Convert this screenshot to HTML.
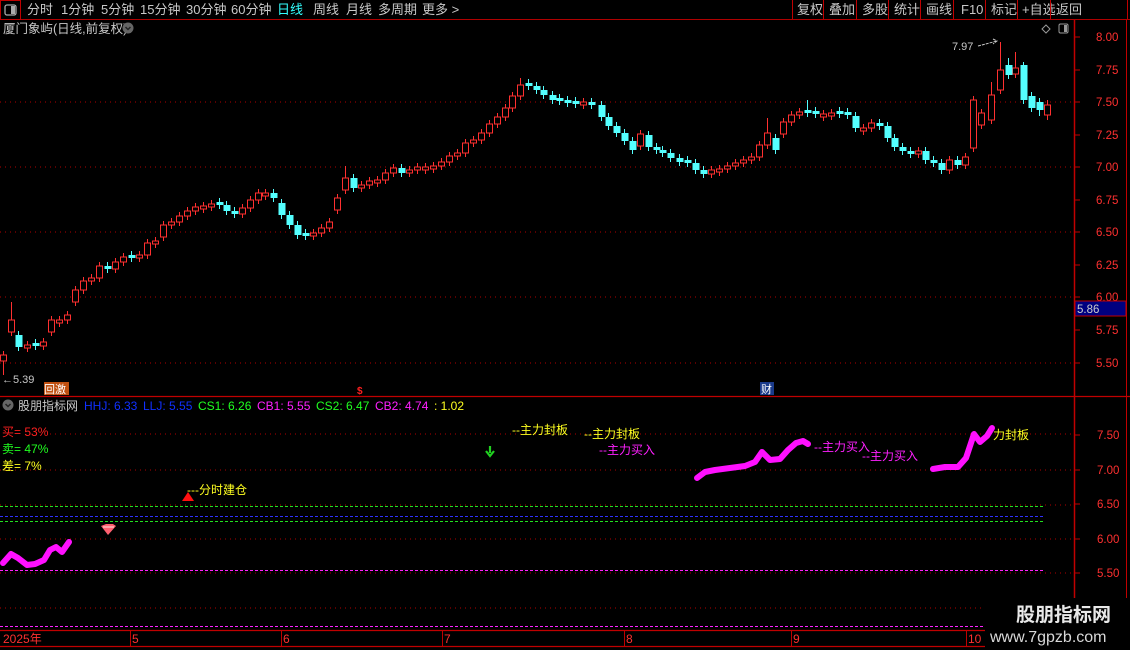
<!DOCTYPE html>
<html><head><meta charset="utf-8">
<style>
html,body{margin:0;padding:0;background:#000;width:1130px;height:650px;overflow:hidden}
body{font-family:"Liberation Sans","Noto Sans CJK SC",sans-serif}
svg{position:absolute;left:0;top:0}
text{font-family:"Liberation Sans","Noto Sans CJK SC",sans-serif}
</style></head><body>
<svg width="1130" height="650" viewBox="0 0 1130 650">
<line x1="0" y1="19.5" x2="1130" y2="19.5" stroke="#b00000"/>
<rect x="0.5" y="0.5" width="20" height="19" fill="none" stroke="#c00000"/>
<rect x="5" y="5" width="11" height="10" rx="2" fill="none" stroke="#aaa" stroke-width="1.3"/>
<rect x="11" y="6" width="4" height="8" fill="#aaa"/>
<g font-size="13" fill="#c8c8c8">
<text x="27" y="14">分时</text><text x="61" y="14">1分钟</text><text x="101" y="14">5分钟</text>
<text x="140" y="14">15分钟</text><text x="186" y="14">30分钟</text><text x="231" y="14">60分钟</text>
<text x="277" y="14" fill="#3ff">日线</text><text x="313" y="14">周线</text><text x="346" y="14">月线</text>
<text x="378" y="14">多周期</text><text x="422" y="14">更多 &gt;</text>
<text x="797" y="14">复权</text><text x="829" y="14">叠加</text><text x="862" y="14">多股</text>
<text x="894" y="14">统计</text><text x="926" y="14">画线</text><text x="961" y="14">F10</text>
<text x="991" y="14">标记</text><text x="1022" y="14">+自选</text><text x="1056" y="14">返回</text>
</g>
<g stroke="#c00000"><line x1="792.5" y1="0" x2="792.5" y2="19"/><line x1="823.5" y1="0" x2="823.5" y2="19"/><line x1="856.5" y1="0" x2="856.5" y2="19"/><line x1="888.5" y1="0" x2="888.5" y2="19"/><line x1="920.5" y1="0" x2="920.5" y2="19"/><line x1="953.5" y1="0" x2="953.5" y2="19"/><line x1="985.5" y1="0" x2="985.5" y2="19"/><line x1="1017.5" y1="0" x2="1017.5" y2="19"/><line x1="1050.5" y1="0" x2="1050.5" y2="19"/><line x1="1127.5" y1="0" x2="1127.5" y2="19"/></g>
<text x="3" y="33" font-size="12.5" fill="#c8c8c8">厦门象屿(日线,前复权)</text>
<circle cx="128" cy="28" r="5.5" fill="#666"/><path d="M125.5 27 L128 29.5 L130.5 27" stroke="#222" stroke-width="1.5" fill="none"/>
<path d="M1046 25 L1050 29 L1046 33 L1042 29 Z" fill="none" stroke="#999"/>
<rect x="1059" y="24" width="9" height="9" rx="1.5" fill="none" stroke="#999"/><rect x="1064" y="25" width="3" height="7" fill="#999"/>
<line x1="1074.5" y1="20" x2="1074.5" y2="630" stroke="#c00000" stroke-width="1.5"/>
<line x1="1126.5" y1="20" x2="1126.5" y2="630" stroke="#c00000"/>
<line x1="0" y1="396.5" x2="1130" y2="396.5" stroke="#c00000" stroke-width="1.2"/>
<g stroke="#b00000" stroke-dasharray="1 4"><line x1="0" y1="102" x2="1074" y2="102"/><line x1="0" y1="167" x2="1074" y2="167"/><line x1="0" y1="232" x2="1074" y2="232"/><line x1="0" y1="297" x2="1074" y2="297"/><line x1="0" y1="363" x2="1074" y2="363"/></g>
<g font-size="11.5" fill="#ff3030">
<text x="1096" y="41">8.00</text><text x="1096" y="74">7.75</text><text x="1096" y="106">7.50</text><text x="1096" y="139">7.25</text><text x="1096" y="171">7.00</text><text x="1096" y="204">6.75</text><text x="1096" y="236">6.50</text><text x="1096" y="269">6.25</text><text x="1096" y="301">6.00</text><text x="1096" y="334">5.75</text><text x="1096" y="367">5.50</text>
</g>
<g stroke="#c00000"><line x1="1075" y1="37" x2="1080" y2="37"/><line x1="1075" y1="70" x2="1080" y2="70"/><line x1="1075" y1="102" x2="1080" y2="102"/><line x1="1075" y1="135" x2="1080" y2="135"/><line x1="1075" y1="167" x2="1080" y2="167"/><line x1="1075" y1="200" x2="1080" y2="200"/><line x1="1075" y1="232" x2="1080" y2="232"/><line x1="1075" y1="265" x2="1080" y2="265"/><line x1="1075" y1="297" x2="1080" y2="297"/><line x1="1075" y1="330" x2="1080" y2="330"/><line x1="1075" y1="363" x2="1080" y2="363"/></g>
<rect x="1075" y="301" width="51" height="15" fill="#000080" stroke="#c00000"/>
<text x="1077" y="313" font-size="11.5" fill="#ccc">5.86</text>
<text x="2" y="383" font-size="11" fill="#c8c8c8">←5.39</text>
<text x="952" y="50" font-size="11" fill="#c8c8c8">7.97</text><path d="M978 46 L997 41 M993 39 L997 41 L993 44" stroke="#c8c8c8" fill="none" stroke-dasharray="3 1"/>
<rect x="44" y="382" width="13" height="13" fill="#c05010"/><rect x="57" y="382" width="12" height="13" fill="#c05010"/>
<text x="44" y="393" font-size="11" fill="#fff">回激</text>
<text x="357" y="394" font-size="10" fill="#ff2020" font-weight="bold">$</text>
<rect x="760" y="382" width="14" height="13" fill="#1a3a8a"/><text x="761" y="393" font-size="11" fill="#fff">财</text>
<!-- red wicks -->
<path stroke="#ff3030" fill="none" d="M3.5 351V375M11.5 302V336M27.5 341V352M43.5 338V350M51.5 316V336M59.5 316V327M67.5 311V324M75.5 286V306M83.5 277V294M91.5 274V285M99.5 262V282M115.5 258V273M123.5 253V266M139.5 251V262M147.5 239V259M155.5 237V248M163.5 221V241M171.5 218V229M179.5 212V226M187.5 207V220M195.5 203V215M203.5 202V213M211.5 200V211M242.5 204V218M250.5 196V212M258.5 189V204M265.5 189V200M313.5 229V240M321.5 224V237M329.5 218V232M337.5 194V214M345.5 166V194M361.5 181V192M369.5 177V189M377.5 176V187M385.5 169V184M393.5 164V177M409.5 166V177M417.5 163V174M425.5 163V174M433.5 162V173M441.5 158V170M449.5 152V166M457.5 149V160M465.5 139V157M473.5 136V147M481.5 129V144M489.5 120V137M497.5 113V128M505.5 104V121M512.5 92V112M520.5 78V100M583.5 98V109M640.5 130V150M711.5 166V178M719.5 165V176M727.5 162V173M735.5 159V170M743.5 156V167M751.5 153V164M759.5 141V161M767.5 118V149M783.5 118V138M791.5 111V126M799.5 108V119M823.5 110V121M831.5 109V120M863.5 124V135M871.5 119V132M918.5 147V158M949.5 156V174M965.5 153V169M973.5 96V152M981.5 109V129M991.5 82V124M1000.5 42V94M1015.5 52V78M1047.5 100V120"/>
<!-- cyan wicks -->
<path stroke="#54ffff" fill="none" d="M18.5 331V351M35.5 339V350M107.5 262V273M131.5 251V262M219.5 198V209M226.5 201V215M234.5 207V218M273.5 189V202M281.5 199V219M289.5 211V229M297.5 221V239M305.5 229V240M353.5 174V192M401.5 164V177M528.5 79V90M536.5 82V94M543.5 86V99M552.5 91V104M559.5 94V105M567.5 96V107M575.5 97V108M591.5 98V109M601.5 101V121M608.5 113V130M616.5 122V137M624.5 129V145M632.5 137V154M648.5 131V151M656.5 143V154M662.5 146V157M670.5 149V162M679.5 154V166M687.5 156V167M695.5 159V174M703.5 166V178M775.5 134V154M807.5 100V117M815.5 107V118M839.5 107V118M847.5 108V119M855.5 112V132M879.5 119V130M887.5 122V142M894.5 134V151M902.5 143V155M910.5 147V158M925.5 147V164M933.5 156V167M941.5 159V174M957.5 156V169M1008.5 58V79M1023.5 62V104M1031.5 92V112M1039.5 98V116"/>
<!-- red bodies -->
<path stroke="#ff3030" fill="#000" d="M0.5 355h6v6h-6zM8.5 320h6v12h-6zM24.5 345h6v3h-6zM40.5 342h6v4h-6zM48.5 320h6v12h-6zM56.5 320h6v3h-6zM64.5 315h6v5h-6zM72.5 290h6v12h-6zM80.5 281h6v9h-6zM88.5 278h6v3h-6zM96.5 266h6v12h-6zM112.5 262h6v7h-6zM120.5 257h6v5h-6zM136.5 255h6v3h-6zM144.5 243h6v12h-6zM152.5 241h6v3h-6zM160.5 225h6v12h-6zM168.5 222h6v3h-6zM176.5 216h6v6h-6zM184.5 211h6v5h-6zM192.5 207h6v4h-6zM200.5 206h6v3h-6zM208.5 204h6v3h-6zM239.5 208h6v6h-6zM247.5 200h6v8h-6zM255.5 193h6v7h-6zM262.5 193h6v3h-6zM310.5 233h6v3h-6zM318.5 228h6v5h-6zM326.5 222h6v6h-6zM334.5 198h6v12h-6zM342.5 178h6v12h-6zM358.5 185h6v3h-6zM366.5 181h6v4h-6zM374.5 180h6v3h-6zM382.5 173h6v7h-6zM390.5 168h6v5h-6zM406.5 170h6v3h-6zM414.5 167h6v3h-6zM422.5 167h6v3h-6zM430.5 166h6v3h-6zM438.5 162h6v4h-6zM446.5 156h6v6h-6zM454.5 153h6v3h-6zM462.5 143h6v10h-6zM470.5 140h6v3h-6zM478.5 133h6v7h-6zM486.5 124h6v9h-6zM494.5 117h6v7h-6zM502.5 108h6v9h-6zM509.5 96h6v12h-6zM517.5 85h6v11h-6zM580.5 102h6v3h-6zM637.5 134h6v12h-6zM708.5 170h6v4h-6zM716.5 169h6v3h-6zM724.5 166h6v3h-6zM732.5 163h6v3h-6zM740.5 160h6v3h-6zM748.5 157h6v3h-6zM756.5 145h6v12h-6zM764.5 133h6v12h-6zM780.5 122h6v12h-6zM788.5 115h6v7h-6zM796.5 112h6v3h-6zM820.5 114h6v3h-6zM828.5 113h6v3h-6zM860.5 128h6v3h-6zM868.5 123h6v5h-6zM915.5 151h6v3h-6zM946.5 160h6v10h-6zM962.5 157h6v8h-6zM970.5 100h6v48h-6zM978.5 113h6v12h-6zM988.5 95h6v25h-6zM997.5 70h6v20h-6zM1012.5 68h6v6h-6zM1044.5 105h6v10h-6z"/>
<!-- cyan bodies -->
<path fill="#54ffff" d="M15.5 335h7v12h-7zM32.5 343h7v3h-7zM104.5 266h7v3h-7zM128.5 255h7v3h-7zM216.5 202h7v3h-7zM223.5 205h7v6h-7zM231.5 211h7v3h-7zM270.5 193h7v5h-7zM278.5 203h7v12h-7zM286.5 215h7v10h-7zM294.5 225h7v10h-7zM302.5 233h7v3h-7zM350.5 178h7v10h-7zM398.5 168h7v5h-7zM525.5 83h7v3h-7zM533.5 86h7v4h-7zM540.5 90h7v5h-7zM549.5 95h7v5h-7zM556.5 98h7v3h-7zM564.5 100h7v3h-7zM572.5 101h7v3h-7zM588.5 102h7v3h-7zM598.5 105h7v12h-7zM605.5 117h7v9h-7zM613.5 126h7v7h-7zM621.5 133h7v8h-7zM629.5 141h7v9h-7zM645.5 135h7v12h-7zM653.5 147h7v3h-7zM659.5 150h7v3h-7zM667.5 153h7v5h-7zM676.5 158h7v4h-7zM684.5 160h7v3h-7zM692.5 163h7v7h-7zM700.5 170h7v4h-7zM772.5 138h7v12h-7zM804.5 110h7v3h-7zM812.5 111h7v3h-7zM836.5 111h7v3h-7zM844.5 112h7v3h-7zM852.5 116h7v12h-7zM876.5 123h7v3h-7zM884.5 126h7v12h-7zM891.5 138h7v9h-7zM899.5 147h7v4h-7zM907.5 151h7v3h-7zM922.5 151h7v9h-7zM930.5 160h7v3h-7zM938.5 163h7v7h-7zM954.5 160h7v5h-7zM1005.5 65h7v10h-7zM1020.5 65h7v35h-7zM1028.5 96h7v12h-7zM1036.5 102h7v8h-7z"/>
<!-- indicator -->
<circle cx="8" cy="405" r="5.5" fill="#666"/><path d="M5.5 404 L8 406.5 L10.5 404" stroke="#222" stroke-width="1.5" fill="none"/>
<g font-size="12">
<text x="18" y="410" fill="#c8c8c8">股朋指标网</text>
<text x="84" y="410" fill="#1030ff">HHJ: 6.33</text><text x="143" y="410" fill="#1030ff">LLJ: 5.55</text>
<text x="198" y="410" fill="#20ff20">CS1: 6.26</text><text x="257" y="410" fill="#ff20ff">CB1: 5.55</text>
<text x="316" y="410" fill="#20ff20">CS2: 6.47</text><text x="375" y="410" fill="#ff20ff">CB2: 4.74</text>
<text x="434" y="410" fill="#ffff20">: 1.02</text>
<text x="2" y="436" fill="#ff2020">买= 53%</text>
<text x="2" y="453" fill="#20ff20">卖= 47%</text>
<text x="2" y="470" fill="#ffff20">差= 7%</text>
</g>
<g stroke="#b00000" stroke-dasharray="1 4"><line x1="50" y1="434" x2="1074" y2="434"/><line x1="0" y1="470" x2="1074" y2="470"/><line x1="0" y1="505" x2="1074" y2="505"/><line x1="0" y1="539" x2="1074" y2="539"/><line x1="0" y1="573" x2="1074" y2="573"/><line x1="0" y1="608" x2="1074" y2="608"/></g>
<line x1="0" y1="506.5" x2="1045" y2="506.5" stroke="#20e020" stroke-dasharray="3 2"/>
<line x1="0" y1="516.5" x2="1045" y2="516.5" stroke="#3030ff" stroke-dasharray="3 2"/>
<line x1="0" y1="521.5" x2="1045" y2="521.5" stroke="#20e020" stroke-dasharray="3 2"/>
<line x1="0" y1="570.5" x2="1045" y2="570.5" stroke="#ff20ff" stroke-dasharray="3 2"/>
<line x1="0" y1="626.5" x2="1074" y2="626.5" stroke="#ff20ff" stroke-dasharray="3 2"/>
<g font-size="11.5" fill="#ff3030"><text x="1097" y="439">7.50</text><text x="1097" y="474">7.00</text><text x="1097" y="508">6.50</text><text x="1097" y="543">6.00</text><text x="1097" y="577">5.50</text></g>
<g stroke="#c00000"><line x1="1075" y1="435" x2="1080" y2="435"/><line x1="1075" y1="470" x2="1080" y2="470"/><line x1="1075" y1="504" x2="1080" y2="504"/><line x1="1075" y1="539" x2="1080" y2="539"/><line x1="1075" y1="573" x2="1080" y2="573"/></g>
<g fill="none" stroke="#ff10ff" stroke-width="6" stroke-linecap="round" stroke-linejoin="round">
<path d="M3 563 L11 554 L18 558 L27 565 L35 564 L44 560 L50 550 L56 547 L62 552 L69 542"/>
<path d="M697 478 L705 472 L715 470 L730 468 L745 466 L755 462 L762 452 L770 460 L780 459 L788 450 L796 443 L803 441 L808 444"/>
<path d="M933 469 L945 467 L958 467 L966 458 L974 434 L980 442 L987 436 L992 428"/>
</g>
<g font-size="12">
<text x="512" y="434" fill="#ffff20">--主力封板</text>
<text x="584" y="438" fill="#ffff20">--主力封板</text>
<text x="599" y="454" fill="#ff20ff">--主力买入</text>
<text x="814" y="451" fill="#ff20ff">--主力买入</text>
<text x="862" y="460" fill="#ff20ff">--主力买入</text>
<text x="993" y="439" fill="#ffff20">力封板</text>
<text x="187" y="494" fill="#ffff20">---分时建仓</text>
</g>
<path d="M182 501 L188 492 L194 501 Z" fill="#ff1010"/>
<path d="M490 446 L490 453 M486 451 L490 456 L494 451" stroke="#20d020" stroke-width="2.2" fill="none"/>
<path d="M101 526 L106 524 L113 524 L116 526 L108 535 Z" fill="#ff6070"/><path d="M103 527 L114 527" stroke="#fff" stroke-width="0.8"/>
<line x1="0" y1="630.5" x2="1074" y2="630.5" stroke="#c00000" stroke-width="1.2"/>
<line x1="0" y1="646.5" x2="985" y2="646.5" stroke="#c00000" stroke-width="1.2"/>
<g stroke="#c00000"><line x1="130.5" y1="630" x2="130.5" y2="646"/><line x1="281.5" y1="630" x2="281.5" y2="646"/><line x1="442.5" y1="630" x2="442.5" y2="646"/><line x1="624.5" y1="630" x2="624.5" y2="646"/><line x1="791.5" y1="630" x2="791.5" y2="646"/><line x1="966.5" y1="630" x2="966.5" y2="646"/></g>
<g font-size="12" fill="#ff3030"><text x="3" y="643">2025年</text><text x="132" y="643">5</text><text x="283" y="643">6</text><text x="444" y="643">7</text><text x="626" y="643">8</text><text x="793" y="643">9</text><text x="968" y="643">10</text></g>
<rect x="985" y="598" width="145" height="52" fill="#000"/>
<text x="1016" y="621" font-size="19" font-weight="bold" fill="#e8e8e8">股朋指标网</text>
<text x="990" y="642" font-size="16" fill="#d8d8d8">www.7gpzb.com</text>
</svg>
</body></html>
